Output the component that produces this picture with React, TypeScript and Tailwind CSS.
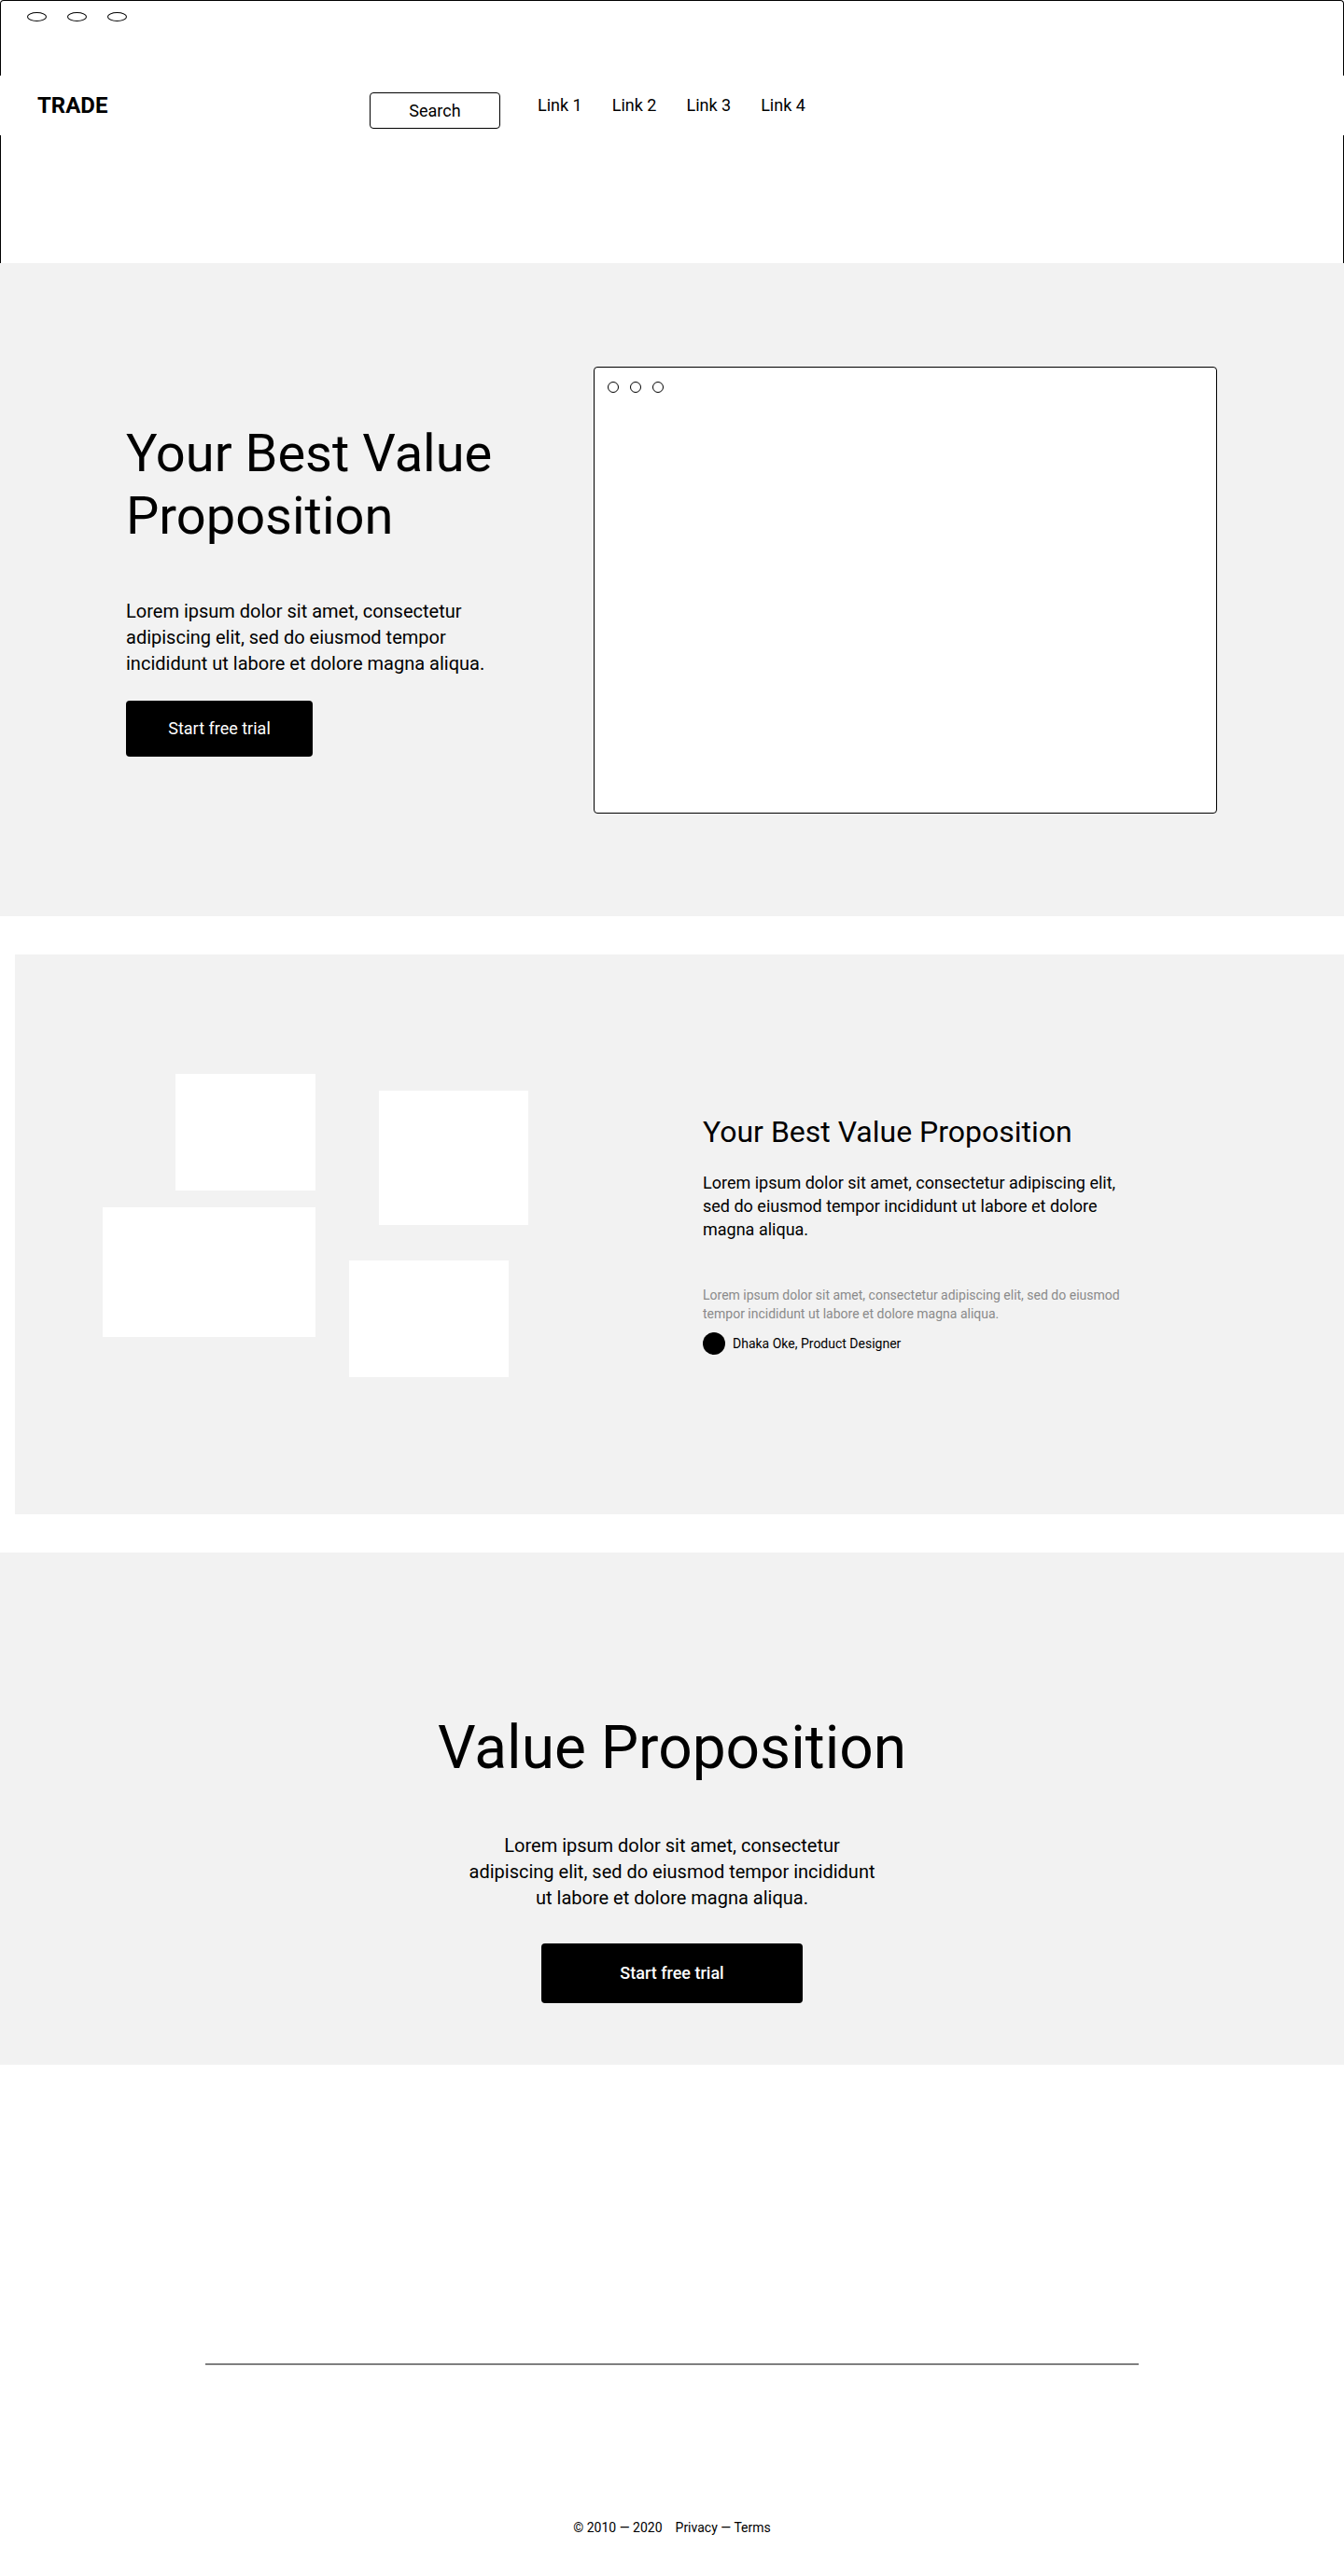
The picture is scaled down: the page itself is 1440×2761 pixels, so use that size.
import React from "react";

function Ellipse() {
  return <span className="block w-[21px] h-[10px] rounded-[50%] border border-black" />;
}

function Dot() {
  return <span className="block w-3 h-3 rounded-full border border-black" />;
}

export default function App() {
  return (
    <div className="w-full bg-white text-black font-['Roboto','Liberation_Sans',sans-serif]">
      {/* Header frame */}
      <header className="relative h-[282px] border-x border-t border-black rounded-t-[4px]">
        <div className="flex gap-[22px] pl-[28px] pt-[12px]">
          <Ellipse />
          <Ellipse />
          <Ellipse />
        </div>
        <nav className="absolute left-[-1px] right-[-1px] top-[80px] h-[64px] bg-white flex items-center pl-10">
          <div className="w-[356px] text-2xl font-bold">TRADE</div>
          <div className="mt-[11px] w-[140px] h-[39px] border border-black rounded-[4px] flex items-center justify-center text-lg">
            Search
          </div>
          <div className="ml-6 flex text-lg">
            <a className="px-4">Link 1</a>
            <a className="px-4">Link 2</a>
            <a className="px-4">Link 3</a>
            <a className="px-4">Link 4</a>
          </div>
        </nav>
      </header>

      {/* Hero */}
      <section className="h-[700px] bg-[#f2f2f2] flex items-center justify-between pl-[135px] pr-[136px]">
        <div className="w-[416px]">
          <h1 className="text-[56px] leading-[1.2] font-normal">Your Best Value Proposition</h1>
          <p className="mt-[54px] text-xl">
            Lorem ipsum dolor sit amet, consectetur adipiscing elit, sed do eiusmod tempor incididunt ut labore et dolore magna aliqua.
          </p>
          <button className="mt-[26px] w-[200px] h-[60px] bg-black text-white text-lg rounded-[4px]">
            Start free trial
          </button>
        </div>
        <div className="w-[668px] h-[479px] bg-white border border-black rounded-[4px] pt-[15px] pl-[14px]">
          <div className="flex gap-3">
            <Dot />
            <Dot />
            <Dot />
          </div>
        </div>
      </section>

      {/* Feature section */}
      <section className="mt-[41px] ml-4 h-[600px] bg-[#f2f2f2] flex items-center">
        <div className="self-start mt-[128px] ml-[94px] relative w-[456px] h-[325px] shrink-0">
          <div className="absolute left-[78px] top-0 w-[150px] h-[125px] bg-white" />
          <div className="absolute left-[296px] top-[18px] w-[160px] h-[144px] bg-white" />
          <div className="absolute left-0 top-[143px] w-[228px] h-[139px] bg-white" />
          <div className="absolute left-[264px] top-[200px] w-[171px] h-[125px] bg-white" />
        </div>
        <div className="ml-[187px] w-[460px]">
          <h2 className="text-[32px] leading-[1.2] font-normal">Your Best Value Proposition</h2>
          <p className="mt-6 text-lg leading-snug">
            Lorem ipsum dolor sit amet, consectetur adipiscing elit, sed do eiusmod tempor incididunt ut labore et dolore magna aliqua.
          </p>
          <p className="mt-12 text-sm text-[#8a8a8a]">
            Lorem ipsum dolor sit amet, consectetur adipiscing elit, sed do eiusmod tempor incididunt ut labore et dolore magna aliqua.
          </p>
          <div className="mt-2.5 flex items-center gap-2">
            <span className="block w-6 h-6 rounded-full bg-black" />
            <span className="text-sm">Dhaka Oke, Product Designer</span>
          </div>
        </div>
      </section>

      {/* CTA */}
      <section className="mt-[41px] h-[549px] bg-[#f2f2f2] flex flex-col items-center pt-[172px]">
        <h2 className="text-[64px] leading-[1.2] font-normal">Value Proposition</h2>
        <p className="mt-[51px] w-[444px] text-center text-xl">
          Lorem ipsum dolor sit amet, consectetur adipiscing elit, sed do eiusmod tempor incididunt ut labore et dolore magna aliqua.
        </p>
        <button className="mt-[35px] w-[280px] h-16 bg-black text-white text-lg font-medium rounded-[4px]">
          Start free trial
        </button>
      </section>

      {/* Footer */}
      <footer className="pt-[320px] pb-[42px]">
        <div className="mx-auto w-[1000px] h-[2px] bg-[#7f7f7f]" />
        <div className="mt-[164px] flex justify-center gap-[14px] text-sm leading-5">
          <span>© 2010 — 2020</span>
          <span>Privacy — Terms</span>
        </div>
      </footer>
    </div>
  );
}
